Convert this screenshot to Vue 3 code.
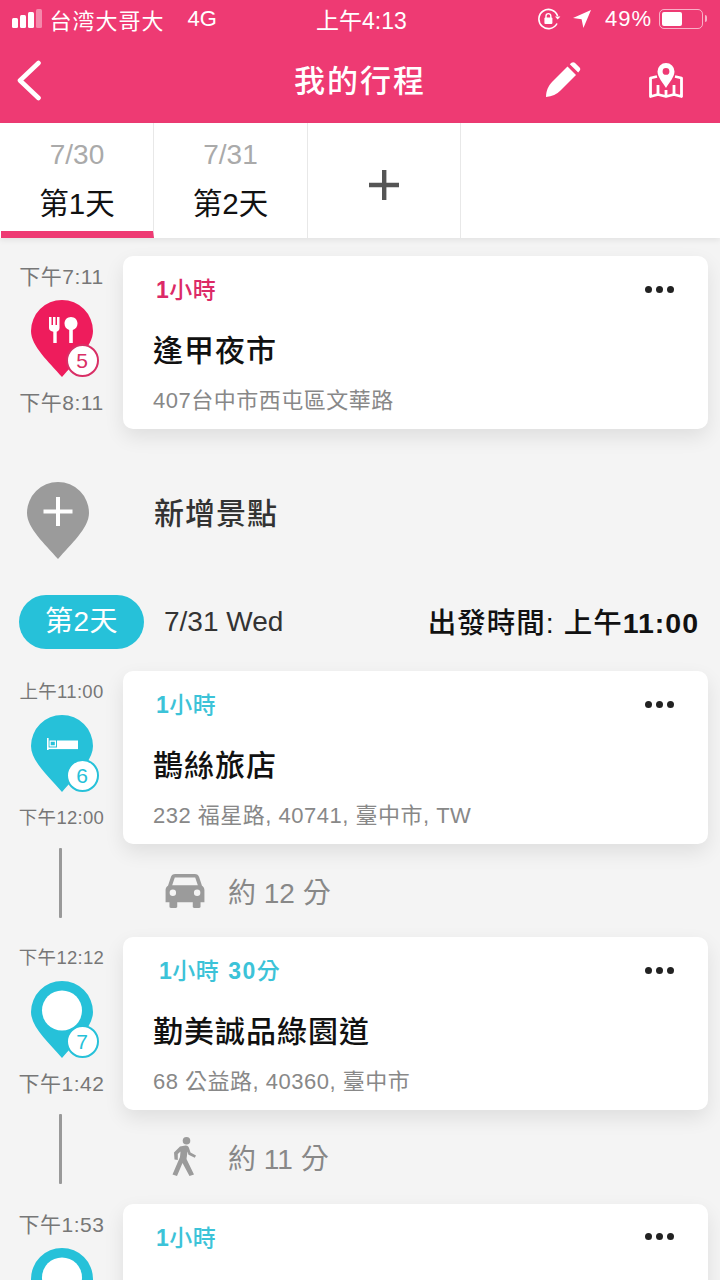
<script setup>
const stopsFirst = [
  {
    id: 5,
    start: '下午7:11',
    end: '下午8:11',
    duration: '小時',
    hours: '1',
    title: '逢甲夜市',
    address: '407台中市西屯區文華路',
    kind: 'food'
  }
]

const stopsSecond = [
  {
    id: 6,
    start: '上午11:00',
    end: '下午12:00',
    hours: '1',
    duration: '小時',
    title: '鵲絲旅店',
    address: '232 福星路, 40741, 臺中市, TW',
    kind: 'hotel',
    transit: { icon: 'car', text: '約 12 分' }
  },
  {
    id: 7,
    start: '下午12:12',
    end: '下午1:42',
    hours: '1',
    duration: '小時',
    extra: '30',
    extraUnit: '分',
    title: '勤美誠品綠園道',
    address: '68 公益路, 40360, 臺中市',
    kind: 'spot',
    transit: { icon: 'walk', text: '約 11 分' }
  },
  {
    id: 8,
    start: '下午1:53',
    end: '',
    hours: '1',
    duration: '小時',
    title: '',
    address: '',
    kind: 'spot'
  }
]

const pinPath = 'M31 0A31 31 0 0 1 62 31C62 46 44 62 31 77C18 62 0 46 0 31A31 31 0 0 1 31 0Z'
</script>

<template>
  <div class="page">
    <header class="header">
      <div class="status">
        <div class="status-left">
          <span class="signal"><i></i><i></i><i></i><i class="dim"></i></span>
          <span class="carrier">台湾大哥大</span>
          <span class="net">4G</span>
        </div>
        <div class="status-time">上午4:13</div>
        <div class="status-right">
          <svg width="24" height="22" viewBox="0 0 24 22" fill="none">
            <path d="M19 15.5A9.6 9.6 0 1 1 19.6 8" stroke="#fff" stroke-width="1.6" />
            <path d="M17 8.5h5.4l-2.7 3z" fill="#fff" />
            <rect x="6.4" y="9.6" width="8" height="6.4" rx="1" fill="#fff" />
            <path d="M8 10V8a2.4 2.4 0 0 1 4.8 0v2" stroke="#fff" stroke-width="1.4" />
          </svg>
          <svg class="arrow" width="20" height="20" viewBox="0 0 20 20">
            <path d="M19 1L1 9l8.6 1.2L11.4 19z" fill="#fff" />
          </svg>
          <span class="battery-text">49%</span>
          <span class="battery"><i></i></span>
          <span class="battery-tip"></span>
        </div>
      </div>
      <div class="navbar">
        <svg class="back" width="26" height="41" viewBox="0 0 26 41" fill="none">
          <path d="M22.5 3L4 20.5L22.5 38" stroke="#fff" stroke-width="4.6" stroke-linecap="round" stroke-linejoin="round" />
        </svg>
        <h1 class="nav-title">我的行程</h1>
        <svg class="pencil" width="36" height="36" viewBox="0 0 36 36">
          <path d="M1 35C1 29 3.5 23.5 7 20L22.5 4.5L31 13L15.500 28.500C12 32 7 34.500 1 35Z" fill="#fff" />
          <path d="M24.800 2.300L26.500 0.800C27.500 0 28.800 0 29.800 0.800L34.600 5.400C35.500 6.400 35.500 7.700 34.600 8.700L33.200 10.500Z" fill="#fff" />
        </svg>
        <svg class="map" width="34" height="36" viewBox="0 0 34 36" fill="none">
          <path d="M8 14.500L1.500 16V34.500L9 32.500L17 34.500L25 32.500L32.500 34.500V16L26 14.500" stroke="#fff" stroke-width="2.800" stroke-linejoin="round" />
          <path d="M9 32V23M25 32V23M17 34V28" stroke="#fff" stroke-width="2.800" />
          <path fill-rule="evenodd" d="M17 1a8.500 8.500 0 0 1 8.500 8.500C25.500 15 20 21 17 26C14 21 8.500 15 8.500 9.500A8.500 8.500 0 0 1 17 1ZM17 6a3.400 3.400 0 1 0 0 6.800a3.400 3.400 0 0 0 0-6.800Z" fill="#fff" />
        </svg>
      </div>
    </header>

    <nav class="tabs">
      <div class="tab tab--active">
        <span class="tab-date">7/30</span>
        <span class="tab-label">第1天</span>
      </div>
      <div class="tab">
        <span class="tab-date">7/31</span>
        <span class="tab-label">第2天</span>
      </div>
      <div class="tab tab--add">
        <svg width="30" height="30" viewBox="0 0 30 30">
          <path d="M13 0h4.400v12.800H30v4.400H17.400V30H13V17.200H0v-4.400h13z" fill="#555" />
        </svg>
      </div>
      <div class="tab tab--blank"></div>
    </nav>

    <main class="list">
      <section v-for="stop in stopsFirst" :key="stop.id" class="row">
        <div class="side">
          <span class="time">{{ stop.start }}</span>
          <div class="pin pin--red">
            <svg width="62" height="77" viewBox="0 0 62 77">
              <path :d="pinPath" fill="#ee1c5c" />
              <g fill="#fff">
                <path d="M18 17h2.500v8h1.500v-8h2.500v8H26v-8h2.500v11c0 2.200-1.500 3.300-2.800 3.800V43h-3.400V31.800C20 31.300 18 30.200 18 28Z" />
                <path d="M40 17c3.700 0 6.500 2.800 6.500 6.500c0 3.400-2 5.700-4.700 6.400V43h-3.600V29.900c-2.700-.7-4.700-3-4.700-6.400c0-3.700 2.800-6.500 6.500-6.500Z" />
              </g>
            </svg>
            <span class="badge">{{ stop.id }}</span>
          </div>
          <span class="time">{{ stop.end }}</span>
        </div>
        <article class="card">
          <div class="card-top">
            <span class="duration duration--red"><b>{{ stop.hours }}</b>{{ stop.duration }}</span>
            <span class="dots"><i></i><i></i><i></i></span>
          </div>
          <h2 class="card-title">{{ stop.title }}</h2>
          <p class="card-address">{{ stop.address }}</p>
        </article>
      </section>

      <section class="add-row">
        <div class="add-pin">
          <svg width="62" height="77" viewBox="0 0 62 77">
            <path :d="pinPath" fill="#9b9b9b" />
            <path d="M29 15h4v12.500H45.500v4H33V44h-4V31.500H16.500v-4H29z" fill="#fff" />
          </svg>
        </div>
        <span class="add-text">新增景點</span>
      </section>

      <section class="day-row">
        <span class="day-pill">第2天</span>
        <span class="day-date">7/31 Wed</span>
        <span class="day-start">出發時間: 上午<b>11:00</b></span>
      </section>

      <template v-for="stop in stopsSecond" :key="stop.id">
        <section class="row">
          <div class="side">
            <span class="time" :class="{ 'time--long': stop.start.length > 6 }">{{ stop.start }}</span>
            <div class="pin pin--teal">
              <svg width="62" height="77" viewBox="0 0 62 77">
                <path :d="pinPath" fill="#26c1d9" />
                <g v-if="stop.kind === 'hotel'" fill="#fff">
                  <rect x="16" y="23" width="1.600" height="12" />
                  <rect x="16" y="32.500" width="31" height="1.600" />
                  <rect x="26" y="25.500" width="21" height="8" />
                  <path fill-rule="evenodd" d="M18.500 25.500h6.500v6h-6.500ZM19.700 26.700v3.600h4.100v-3.600Z" />
                </g>
                <circle v-else cx="31" cy="29.500" r="20" fill="#fff" />
              </svg>
              <span v-if="stop.end" class="badge">{{ stop.id }}</span>
            </div>
            <span v-if="stop.end" class="time" :class="{ 'time--long': stop.end.length > 6 }">{{ stop.end }}</span>
          </div>
          <article class="card">
            <div class="card-top" :class="{ 'card-top--shift': stop.extra }">
              <span class="duration">
                <b>{{ stop.hours }}</b>{{ stop.duration }}<template v-if="stop.extra">&nbsp;<b class="extra">{{ stop.extra }}</b>{{ stop.extraUnit }}</template>
              </span>
              <span class="dots"><i></i><i></i><i></i></span>
            </div>
            <h2 class="card-title">{{ stop.title }}</h2>
            <p class="card-address">{{ stop.address }}</p>
          </article>
        </section>
        <section v-if="stop.transit" class="transit">
          <div class="transit-side"><span class="transit-line"></span></div>
          <span class="transit-icon">
            <svg v-if="stop.transit.icon === 'car'" width="40" height="34" viewBox="0 0 40 35">
              <path fill-rule="evenodd" fill="#9b9b9b" d="M10 0H30C32.500 0 33.800 1.200 34.500 3.200L37.500 12C39 12.800 40 14.500 40 16.500V29H36V33.500C36 34.500 35.500 35 34.500 35H29.500C28.500 35 28 34.500 28 33.500V29H12V33.500C12 34.500 11.500 35 10.500 35H5.500C4.500 35 4 34.500 4 33.500V29H0V16.500C0 14.500 1 12.800 2.500 12L5.500 3.200C6.200 1.200 7.500 0 10 0ZM9.500 3.500L6.800 11.500H33.200L30.500 3.500ZM7.500 16a3.300 3.300 0 1 0 0 6.600a3.300 3.300 0 0 0 0-6.600ZM32.500 16a3.300 3.300 0 1 0 0 6.600a3.300 3.300 0 0 0 0-6.600Z" />
            </svg>
            <svg v-else class="walk" width="28" height="40" viewBox="0 0 26 40">
              <circle cx="15.500" cy="3.800" r="3.800" fill="#9b9b9b" />
              <path fill="#9b9b9b" d="M9 9.500L14.500 8.500C16.500 8.300 17.500 9.500 18 11L19.500 15.500L25 18.500L23.800 20.800L17.500 17.800L16.500 14.500L15.500 22L23 37.500L18.500 39L11.500 26L6 39L1.500 37.500L9 20L9.500 14.500L6.800 17V23L3.500 22.500L3 15.500Z" />
            </svg>
          </span>
          <span class="transit-text">{{ stop.transit.text }}</span>
        </section>
      </template>
    </main>
  </div>
</template>

<style scoped>
.page {
  width: 720px;
  height: 1280px;
  overflow: hidden;
  background: #f4f4f4;
  font-family: "Liberation Sans", "Noto Sans CJK TC", sans-serif;
  color: #111;
}

.header {
  height: 123px;
  background: #ee3a73;
  color: #fff;
}

.status {
  height: 40px;
  box-sizing: border-box;
  padding: 0 13px 3px 12px;
  display: flex;
  align-items: center;
  font-size: 22px;
}

.status-left {
  display: flex;
  align-items: center;
  width: 304px;
}

.signal {
  display: flex;
  align-items: flex-end;
  gap: 2.500px;
  margin-right: 8px;
}

.signal i {
  width: 5.500px;
  background: #fff;
  border-radius: 1.500px;
  height: 10px;
}

.signal i:nth-child(2) {
  height: 13px;
}

.signal i:nth-child(3) {
  height: 16px;
}

.signal i:nth-child(4) {
  height: 19px;
}

.signal .dim {
  background: rgba(255, 255, 255, 0.4);
}

.carrier {
  letter-spacing: 1px;
}

.net {
  margin-left: 23px;
}

.status-time {
  font-size: 23px;
}

.status-right {
  display: flex;
  align-items: center;
  margin-left: auto;
}

.arrow {
  margin-left: 10px;
}

.battery-text {
  margin-left: 13px;
  letter-spacing: 1px;
}

.battery {
  margin-left: 7px;
  width: 44px;
  height: 20px;
  border: 1.500px solid rgba(255, 255, 255, 0.6);
  border-radius: 5px;
  padding: 2px;
  box-sizing: border-box;
  display: flex;
}

.battery i {
  width: 20px;
  background: #fff;
  border-radius: 2px;
}

.battery-tip {
  width: 2px;
  height: 7px;
  margin-left: 2px;
  background: rgba(255, 255, 255, 0.6);
  border-radius: 0 2px 2px 0;
}

.navbar {
  height: 83px;
  position: relative;
  display: flex;
  align-items: center;
  justify-content: center;
}

.back {
  position: absolute;
  left: 16px;
  top: 20px;
}

.nav-title {
  margin: -7px 0 0;
  font-size: 31px;
  font-weight: 500;
  letter-spacing: 2px;
}

.pencil {
  position: absolute;
  left: 545px;
  top: 22px;
}

.map {
  position: absolute;
  left: 649px;
  top: 22px;
}

.tabs {
  height: 115px;
  display: flex;
  background: #fff;
  box-shadow: 0 2px 6px rgba(0, 0, 0, 0.08);
  position: relative;
}

.tab {
  width: 154px;
  flex-shrink: 0;
  box-sizing: border-box;
  border-right: 1px solid #e8e8e8;
  display: flex;
  flex-direction: column;
  align-items: center;
  padding-top: 13px;
}

.tab--active {
  border-bottom: 7px solid #ee3a73;
  margin-left: 1px;
  width: 153px;
}

.tab--add {
  width: 153px;
  justify-content: center;
  padding-top: 8px;
}

.tab--blank {
  border-right: 0;
  flex: 1;
}

.tab-date {
  font-size: 28px;
  line-height: 38px;
  color: #aaa;
}

.tab-label {
  font-size: 29.500px;
  line-height: 44px;
  margin-top: 8px;
  color: #111;
}

.list {
  padding-top: 18px;
}

.row {
  display: flex;
  padding-right: 12px;
}

.side {
  width: 123px;
  flex-shrink: 0;
  box-sizing: border-box;
  padding-top: 7px;
  display: flex;
  flex-direction: column;
  align-items: center;
}

.time {
  font-size: 21px;
  line-height: 28px;
  white-space: nowrap;
  color: #777;
  letter-spacing: 0.500px;
}

.time--long {
  font-size: 18.500px;
  letter-spacing: 0.300px;
}

.pin {
  position: relative;
  width: 62px;
  height: 77px;
  margin: 9px 0 12px;
  --pin-color: #26c1d9;
}

.pin svg {
  display: block;
}

.pin--red {
  --pin-color: #d92f66;
}

.badge {
  position: absolute;
  right: -6px;
  bottom: 0;
  width: 33px;
  height: 33px;
  box-sizing: border-box;
  border: 2px solid var(--pin-color);
  border-radius: 50%;
  background: #fff;
  color: var(--pin-color);
  font-size: 21px;
  line-height: 29px;
  text-align: center;
}

.card {
  flex: 1;
  height: 173px;
  box-sizing: border-box;
  padding: 18px 33px 0 30px;
  background: #fff;
  border-radius: 10px;
  box-shadow: 0 8px 20px rgba(0, 0, 0, 0.09);
}

.card-top {
  display: flex;
  align-items: center;
  justify-content: space-between;
  height: 32px;
  padding-left: 3px;
}

.card-top--shift {
  padding-left: 6px;
}

.duration {
  margin-top: -4px;
  font-size: 23px;
  color: #3cc3d8;
  font-weight: 500;
  letter-spacing: 0.500px;
}

.duration b {
  font-weight: 700;
}

.duration .extra {
  letter-spacing: 1.500px;
  margin-left: 2px;
}

.duration--red {
  color: #dc2a67;
}

.dots {
  display: flex;
  gap: 4px;
  margin: -2px 1px 0 0;
}

.dots i {
  width: 7px;
  height: 7px;
  border-radius: 50%;
  background: #222;
}

.card-title {
  margin: 23px 0 0;
  font-size: 30px;
  line-height: 44px;
  font-weight: 500;
  letter-spacing: 1px;
  color: #111;
}

.card-address {
  margin: 13px 0 0;
  font-size: 22px;
  line-height: 30px;
  letter-spacing: 0.500px;
  color: #888;
}

.add-row {
  height: 166px;
  display: flex;
  align-items: center;
}

.add-pin {
  width: 116px;
  padding-left: 27px;
  margin-top: 16px;
  box-sizing: border-box;
  flex-shrink: 0;
  display: flex;
}

.add-text {
  margin: -2px 0 0 38px;
  font-size: 30px;
  font-weight: 500;
  letter-spacing: 1px;
  color: #333;
}

.day-row {
  height: 54px;
  margin-bottom: 22px;
  padding: 0 21px 0 19px;
  display: flex;
  align-items: center;
}

.day-pill {
  width: 125px;
  height: 54px;
  line-height: 54px;
  text-align: center;
  border-radius: 27px;
  background: #26c1d9;
  color: #fff;
  font-size: 28px;
  letter-spacing: 0.500px;
}

.day-date {
  margin-left: 20px;
  font-size: 28px;
  color: #333;
}

.day-start {
  margin: -3px 0 0 auto;
  font-size: 28.500px;
  font-weight: 500;
  color: #111;
  letter-spacing: 1px;
}

.day-start b {
  font-weight: 700;
}

.transit {
  height: 93.400px;
  display: flex;
  align-items: center;
}

.transit-side {
  width: 165px;
  flex-shrink: 0;
  height: 100%;
  padding: 4px 0 0 59px;
  box-sizing: border-box;
}

.transit-line {
  display: block;
  width: 3px;
  height: 70px;
  background: #999;
  border-radius: 1px;
}

.transit-icon {
  width: 63px;
  flex-shrink: 0;
  display: flex;
}

.walk {
  margin-left: 5px;
}

.transit-text {
  font-size: 28px;
  color: #888;
}
</style>

<style>
html,
body {
  background: #f4f4f4;
  overflow: hidden;
}
</style>
